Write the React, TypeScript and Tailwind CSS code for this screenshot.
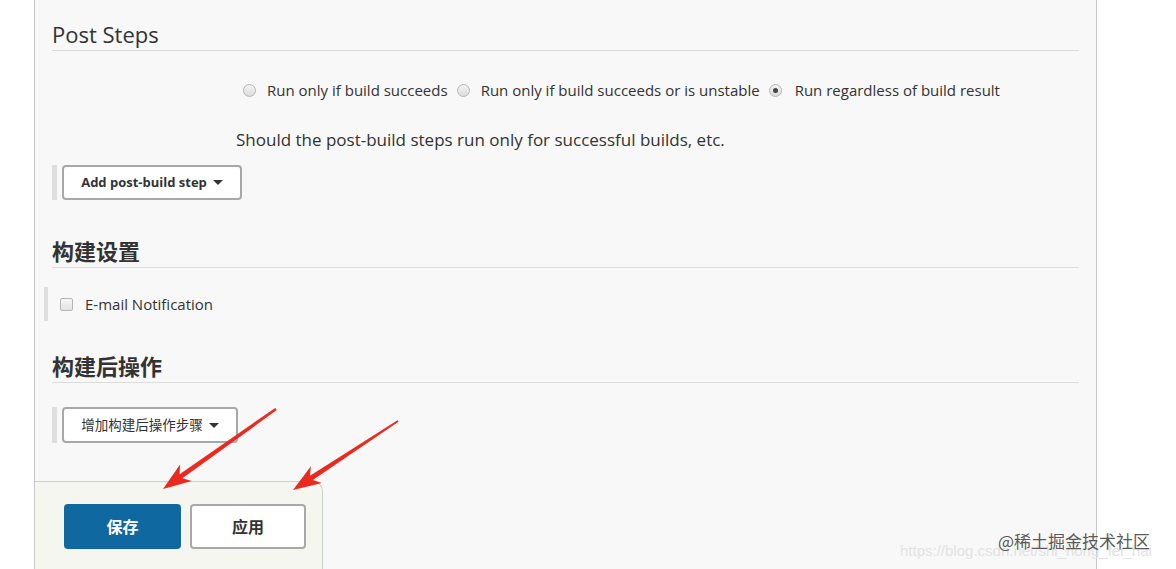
import React from "react";

const FONT = { fontFamily: '"Open Sans", "Noto Sans CJK SC", sans-serif' };

function Radio({ checked }: { checked?: boolean }) {
  return (
    <span className="inline-flex h-[13px] w-[13px] shrink-0 items-center justify-center rounded-full border border-[#b4b4b4] bg-gradient-to-b from-[#f4f4f4] to-[#dcdcdc]">
      {checked && <span className="h-[5px] w-[5px] rounded-full bg-[#444]" />}
    </span>
  );
}

function Caret() {
  return (
    <span className="ml-[6px] inline-block h-0 w-0 border-x-[5px] border-t-[5px] border-x-transparent border-t-[#333] align-middle" />
  );
}

export default function App() {
  return (
    <div
      className="relative flex h-[569px] w-[1176px] overflow-hidden bg-white text-[#333]"
      style={FONT}
    >
      <div className="w-[34px] shrink-0" />
      <div className="flex w-[1063px] shrink-0 flex-col border-x border-[#c8c8c8] bg-[#f8f8f8] px-[17px]">
        {/* Post Steps */}
        <div className="mt-[20px] border-b border-[#dcdcdc] pb-[2px]">
          <div className="h-[28px] text-[22px] leading-[28px] text-[#333]">Post Steps</div>
        </div>

        <div className="mt-[29px] flex h-[20px] items-center whitespace-nowrap pl-[191px] text-[15px] text-[#333]">
          <Radio />
          <span className="ml-[11px] mr-[9px]">Run only if build succeeds</span>
          <Radio />
          <span className="ml-[11px] mr-[9px]">Run only if build succeeds or is unstable</span>
          <Radio checked />
          <span className="ml-[13px]">Run regardless of build result</span>
        </div>

        <div className="mt-[28px] h-[24px] pl-[184px] text-[17px] leading-[24px] text-[#333]">
          Should the post-build steps run only for successful builds, etc.
        </div>

        <div className="mt-[13px] flex h-[35px]">
          <div className="w-[5px] bg-[#dedede]" />
          <button className="ml-[5px] flex h-[35px] w-[180px] items-center justify-center rounded-[4px] border-2 border-[#a8a8a8] bg-white text-[13px] font-bold text-[#333]">
            Add post-build step
            <Caret />
          </button>
        </div>

        {/* 构建设置 */}
        <div className="mt-[37px] border-b border-[#dcdcdc] pb-[2px]">
          <div className="h-[28px] text-[22px] font-bold leading-[28px] text-[#333]">构建设置</div>
        </div>

        <div className="-ml-[8px] mt-[19px] flex h-[34px] items-center">
          <div className="h-[34px] w-[4px] bg-[#dedede]" />
          <span className="ml-[12px] h-[13px] w-[13px] rounded-[2px] border border-[#b4b4b4] bg-gradient-to-b from-[#f6f6f6] to-[#e2e2e2]" />
          <span className="ml-[12px] text-[15px] text-[#333]">E-mail Notification</span>
        </div>

        {/* 构建后操作 */}
        <div className="mt-[31px] border-b border-[#dcdcdc] pb-[2px]">
          <div className="h-[28px] text-[22px] font-bold leading-[28px] text-[#333]">构建后操作</div>
        </div>

        <div className="mt-[24px] flex h-[36px]">
          <div className="w-[5px] bg-[#dedede]" />
          <button className="ml-[5px] flex h-[36px] w-[176px] items-center justify-center rounded-[4px] border-2 border-[#a8a8a8] bg-white text-[13.5px] text-[#333]">
            增加构建后操作步骤
            <Caret />
          </button>
        </div>

        {/* bottom bar */}
        <div className="-ml-[17px] mt-[38px] flex h-[120px] w-[288px] shrink-0 items-start gap-[9px] rounded-tr-[10px] border-r border-t border-[#c5d3c9] bg-[#f6f6f1] pl-[29px] pt-[22px]">
          <button className="flex h-[45px] w-[117px] items-center justify-center rounded-[4px] bg-[#0f68a0] text-[16px] font-bold text-white">
            保存
          </button>
          <button className="flex h-[45px] w-[116px] items-center justify-center rounded-[4px] border-2 border-[#a8a8a8] bg-white text-[16px] font-bold text-[#333]">
            应用
          </button>
        </div>
      </div>
      <div className="flex-1" />

      {/* red annotation arrows */}
      <svg className="pointer-events-none absolute left-0 top-0" width="1176" height="569">
        <polygon
          fill="#ea2a1f"
          points="276.8,410.1 182.4,478.3 191.7,481.0 163,489 180.1,464.6 179.6,474.3 275.2,407.9"
        />
        <polygon
          fill="#ea2a1f"
          points="398.5,421.8 312.8,480.0 321.9,483.0 293,490 310.9,466.2 310.0,475.8 397.5,420.2"
        />
      </svg>

      {/* watermark */}
      <div
        className="pointer-events-none absolute left-[900px] top-[541px] text-[15px] leading-[20px] text-[#e2e2e2]"
        style={{ fontFamily: '"Liberation Sans", sans-serif' }}
      >
        https://blog.csdn.net/shi_hong_fei_hai
      </div>
      <div
        className="pointer-events-none absolute left-[998px] top-[530px] text-[17px] leading-[22px] text-[#5a5a5a]"
        style={{ fontFamily: '"Noto Sans CJK SC", sans-serif' }}
      >
        @稀土掘金技术社区
      </div>
    </div>
  );
}
